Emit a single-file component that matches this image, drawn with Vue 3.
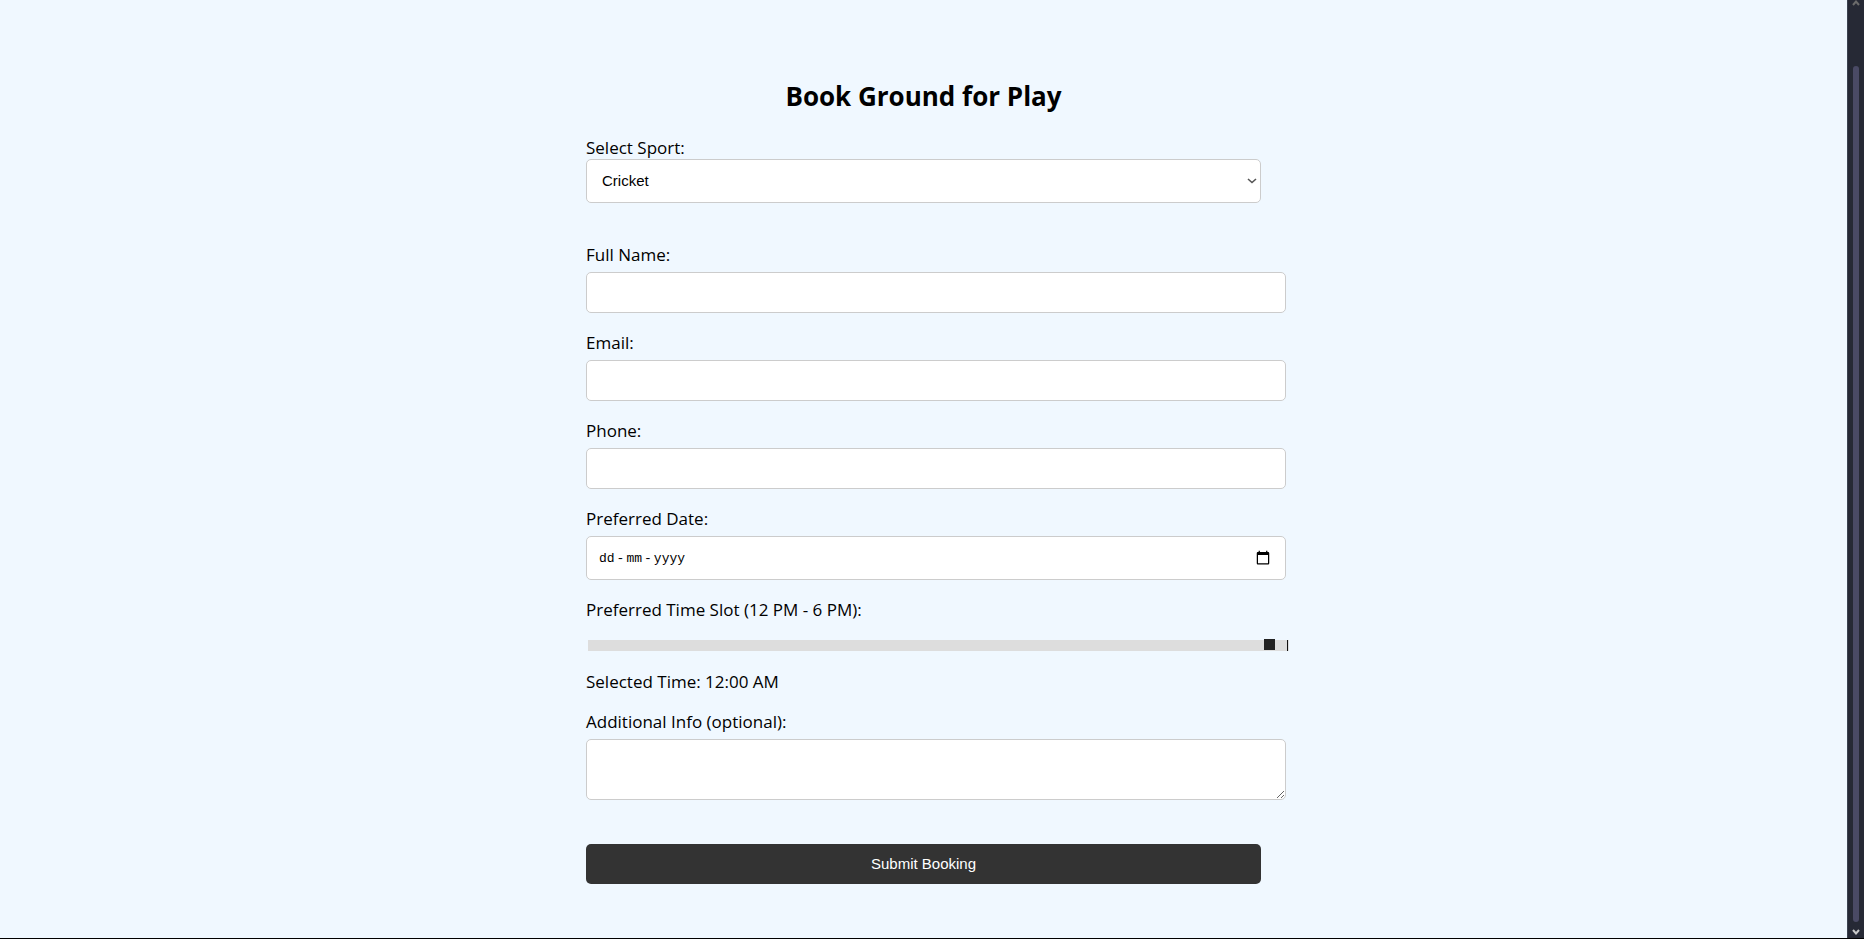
<script setup>
import { ref } from 'vue'

const sports = ['Cricket', 'Football', 'Tennis', 'Badminton']
const sport = ref('Cricket')
const name = ref('')
const email = ref('')
const phone = ref('')
const date = ref('')
const slot = ref(98)
const info = ref('')
</script>

<template>
  <div class="page">
    <main class="content">
      <form class="booking" @submit.prevent>
        <h1>Book Ground for Play</h1>

        <div class="group sport">
          <label for="sport">Select Sport:</label>
          <div class="select-wrap">
            <select id="sport" v-model="sport">
              <option v-for="s in sports" :key="s">{{ s }}</option>
            </select>
            <svg class="chevron" viewBox="0 0 10 6" aria-hidden="true"><path d="M1 1l4 3.5L9 1" /></svg>
          </div>
        </div>

        <div class="group">
          <label for="name">Full Name:</label>
          <input id="name" v-model="name" class="box" type="text" />
        </div>
        <div class="group">
          <label for="email">Email:</label>
          <input id="email" v-model="email" class="box" type="email" />
        </div>
        <div class="group">
          <label for="phone">Phone:</label>
          <input id="phone" v-model="phone" class="box" type="tel" />
        </div>
        <div class="group">
          <label for="date">Preferred Date:</label>
          <div class="date-wrap">
            <input id="date" v-model="date" class="box date" :class="{ empty: !date }" type="date" />
            <div v-if="!date" class="hint" aria-hidden="true">
              <span>dd</span><span>-</span><span>mm</span><span>-</span><span>yyyy</span>
            </div>
          </div>
        </div>
        <div class="group time">
          <label for="slot">Preferred Time Slot (12 PM - 6 PM):</label>
          <input id="slot" v-model="slot" class="slider" type="range" min="0" max="100" />
          <p>Selected Time: 12:00 AM</p>
        </div>
        <div class="group">
          <label for="info">Additional Info (optional):</label>
          <textarea id="info" v-model="info" class="box area"></textarea>
        </div>

        <button type="submit">Submit Booking</button>
      </form>
    </main>
    <div class="scrollbar" aria-hidden="true">
      <svg class="up" viewBox="0 0 8 6"><path d="M1 5l3-3.500L7 5" /></svg>
      <div class="thumb"></div>
      <svg class="down" viewBox="0 0 8 6"><path d="M1 1l3 3.500L7 1" /></svg>
    </div>
  </div>
</template>

<style>
body {
  margin: 0;
}
</style>

<style scoped>
.page {
  box-sizing: border-box;
  display: grid;
  grid-template-columns: 1fr 17px;
  min-height: 100vh;
  border-bottom: 1px solid #000;
  background: #f0f8ff;
  color: #000;
  font-family: "Segoe UI", "Open Sans", "Noto Sans", sans-serif;
  font-size: 17px;
  line-height: 24px;
}
.content {
  padding: 76px 24px 32px;
}
.booking {
  width: 100%;
  max-width: 675px;
  margin: 0 auto;
}
h1 {
  margin: 0 0 20px;
  font-size: 26px;
  line-height: 40px;
  font-weight: 700;
  text-align: center;
}
.group {
  margin-bottom: 18px;
}
.group label {
  display: block;
  margin-bottom: 5px;
}
.sport {
  margin-bottom: 40px;
}
.sport label {
  margin-bottom: -1px;
}
.select-wrap,
.date-wrap {
  position: relative;
}
select {
  display: block;
  box-sizing: border-box;
  width: 100%;
  height: 44px;
  padding: 0 15px 1px;
  border: 1px solid #ccc;
  border-radius: 5px;
  background: #fff;
  color: #000;
  font: 15px "Liberation Sans", sans-serif;
  appearance: none;
}
.chevron {
  position: absolute;
  top: 19px;
  right: 4px;
  width: 10px;
  height: 6px;
  fill: none;
  stroke: #555;
  stroke-width: 1.6;
  pointer-events: none;
}
.box {
  display: block;
  box-sizing: border-box;
  width: calc(100% + 25px);
  height: 41px;
  margin: 0;
  padding: 12px;
  border: 1px solid #ccc;
  border-radius: 5px;
  background: #fff;
  font: 13px "Liberation Mono", monospace;
}
.date {
  height: 44px;
}
.date::-webkit-calendar-picker-indicator {
  width: 16px;
  height: 16px;
}
.date.empty::-webkit-datetime-edit {
  opacity: 0;
}
.hint {
  position: absolute;
  top: 0;
  left: 13px;
  display: flex;
  gap: 2px;
  font: 13px/46px "Liberation Mono", monospace;
  pointer-events: none;
}
.slider {
  display: block;
  width: calc(100% + 26px);
  height: 11px;
  margin: 18px 0 19px 2px;
  appearance: none;
  background: linear-gradient(#111, #111) right 1px center / 1px 100% no-repeat #ddd;
}
.slider::-webkit-slider-thumb {
  appearance: none;
  width: 11px;
  height: 11px;
  margin-top: -2px;
  background: #222;
}
.time p {
  margin: 0;
}
.time {
  margin-bottom: 16px;
}
.area {
  height: 61px;
  resize: vertical;
}
button {
  display: block;
  width: 100%;
  height: 40px;
  margin-top: 44px;
  padding: 0 6px 1px;
  border: 0;
  border-radius: 5px;
  background: #333;
  color: #fff;
  font: 15px "Liberation Sans", sans-serif;
}
.scrollbar {
  display: flex;
  flex-direction: column;
  align-items: center;
  border-left: 1px solid #3b4250;
  background: #262935;
}
.scrollbar svg {
  width: 8px;
  height: 6px;
  fill: none;
  stroke: #6b6b6b;
  stroke-width: 2;
}
.scrollbar .down {
  margin: 7px 0 3px;
  stroke: #c8c8c8;
}
.thumb {
  flex: 1;
  width: 6px;
  margin-top: 60px;
  border-radius: 3px;
  background: #4a4a65;
}
</style>
